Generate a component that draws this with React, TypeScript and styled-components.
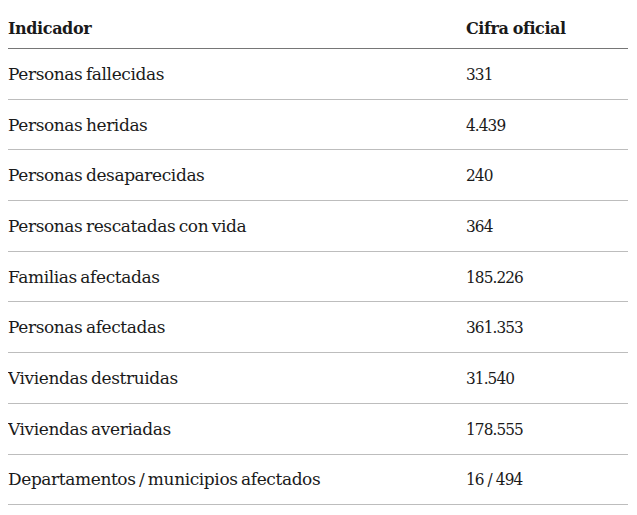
import React from "react";
import styled, { createGlobalStyle } from "styled-components";

const GlobalStyle = createGlobalStyle`
  body {
    margin: 8px;
    background: #ffffff;
    font-family: "DejaVu Serif", "Liberation Serif", serif;
    color: #1a1a1a;
  }
`;

const StyledTable = styled.table`
  width: 620px;
  border-collapse: collapse;
`;

const StyledHeadCell = styled.th<{ $first?: boolean }>`
  text-align: left;
  font-size: 16px;
  font-weight: bold;
  letter-spacing: -0.4px;
  word-spacing: -1px;
  height: 40px;
  padding: 0;
  vertical-align: middle;
  border-bottom: 1px solid #767676;
  width: ${(props) => (props.$first ? "458px" : "auto")};
`;

const StyledCell = styled.td<{ $numeric?: boolean }>`
  text-align: left;
  font-family: ${(props) =>
    props.$numeric ? `"DejaVu Serif Condensed", "DejaVu Serif", serif` : `"DejaVu Serif", serif`};
  font-stretch: ${(props) => (props.$numeric ? "condensed" : "normal")};
  font-size: 17px;
  font-weight: normal;
  letter-spacing: ${(props) => (props.$numeric ? "-0.9px" : "-0.4px")};
  word-spacing: ${(props) => (props.$numeric ? "0px" : "-1.5px")};
  height: 49.7px;
  padding: 0;
  vertical-align: middle;
  border-bottom: 1px solid #bdbdbd;
`;

const rows: { label: string; value: string }[] = [
  { label: "Personas fallecidas", value: "331" },
  { label: "Personas heridas", value: "4.439" },
  { label: "Personas desaparecidas", value: "240" },
  { label: "Personas rescatadas con vida", value: "364" },
  { label: "Familias afectadas", value: "185.226" },
  { label: "Personas afectadas", value: "361.353" },
  { label: "Viviendas destruidas", value: "31.540" },
  { label: "Viviendas averiadas", value: "178.555" },
  { label: "Departamentos / municipios afectados", value: "16 / 494" },
];

const App: React.FC = () => {
  return (
    <>
      <GlobalStyle />
      <StyledTable>
        <thead>
          <tr>
            <StyledHeadCell $first>Indicador</StyledHeadCell>
            <StyledHeadCell>Cifra oficial</StyledHeadCell>
          </tr>
        </thead>
        <tbody>
          {rows.map((row) => (
            <tr key={row.label}>
              <StyledCell>{row.label}</StyledCell>
              <StyledCell $numeric>{row.value}</StyledCell>
            </tr>
          ))}
        </tbody>
      </StyledTable>
    </>
  );
};

export default App;
